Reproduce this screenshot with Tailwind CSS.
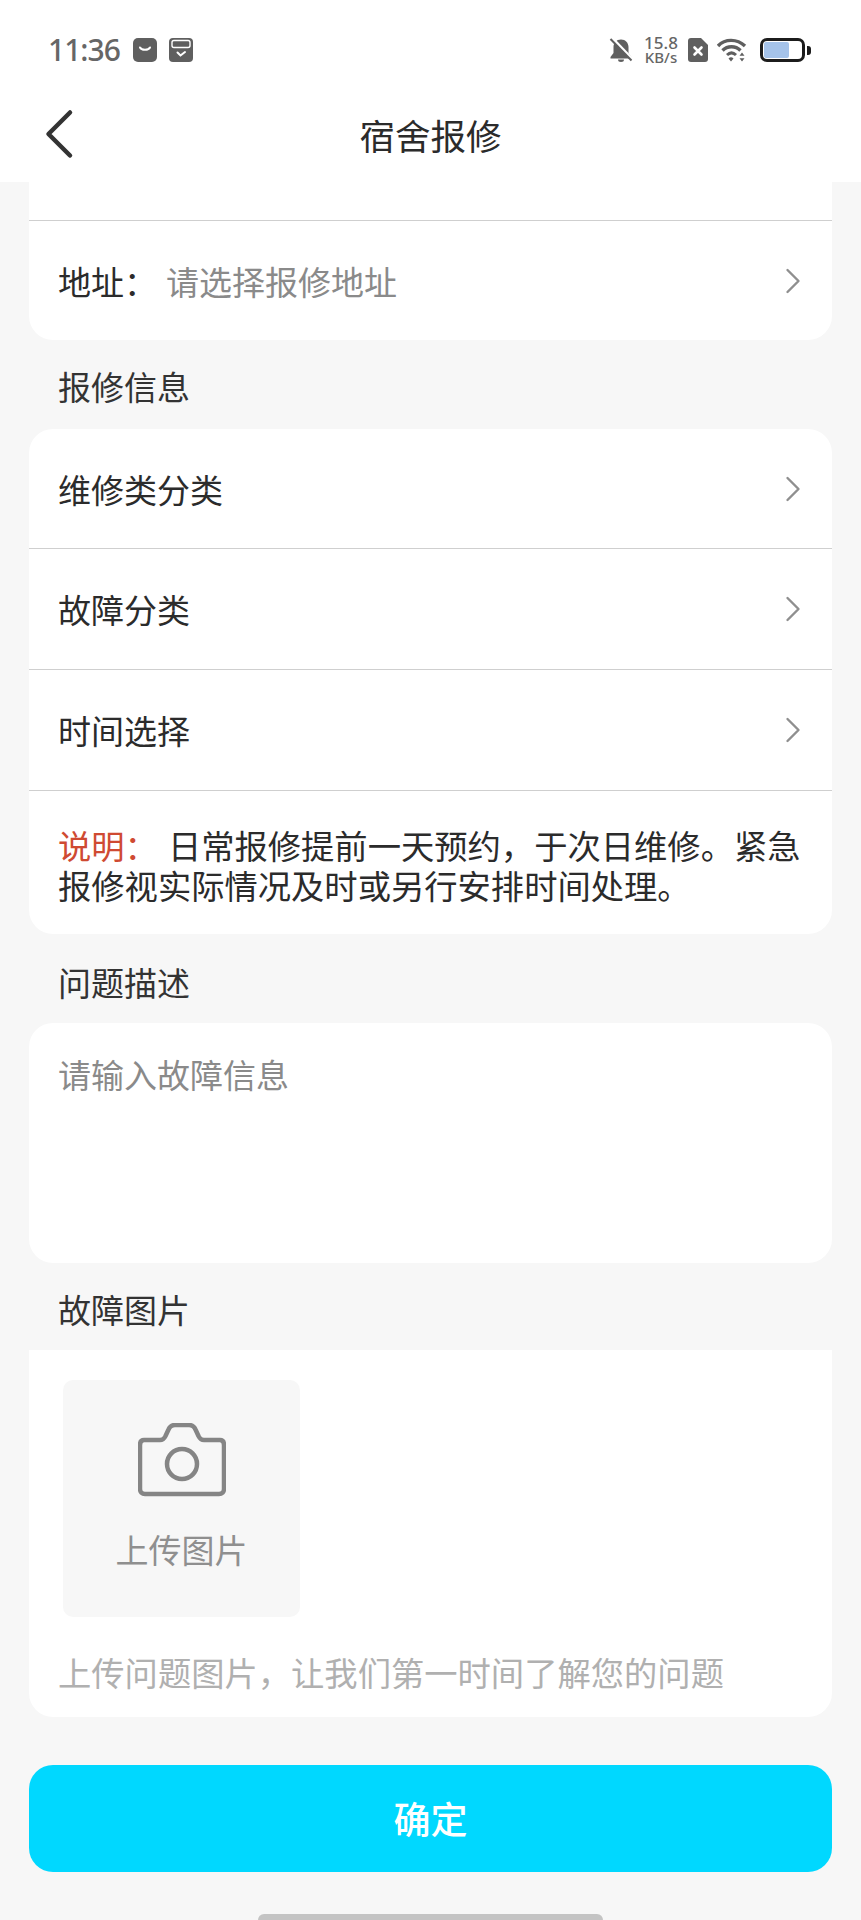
<!DOCTYPE html>
<html lang="zh-CN">
<head>
  <meta charset="UTF-8">
  <meta name="viewport" content="width=device-width, initial-scale=1.0">
  <title>宿舍报修</title>
  <script src="https://cdn.jsdelivr.net/npm/@tailwindcss/browser@4"></script>
</head>
<body class="bg-[#f7f7f7] text-[#2b2b2b] font-['Noto_Sans_CJK_SC','Noto_Sans',sans-serif]">
  <div class="w-[861px] h-[1920px] overflow-hidden flex flex-col relative">

    <!-- status bar + nav -->
    <header class="bg-white h-[182px] shrink-0">
      <div class="h-[76px] pt-[27px] pl-[48px] pr-[50px] flex justify-between items-start">
        <div class="flex items-center h-[46px]">
          <span class="font-['Noto_Sans',sans-serif] font-medium text-[30px] tracking-[-1px] leading-[46px] text-[#666] w-[85px]">11:36</span>
          <svg width="24" height="24" viewBox="0 0 24 24"><rect width="24" height="24" rx="5" fill="#5f5f5f"/><path d="M7 9.500c1.500 3 8.500 3 10 0" fill="none" stroke="#fff" stroke-width="2" stroke-linecap="round"/></svg>
          <svg class="ml-[12px]" width="24" height="24" viewBox="0 0 24 24"><rect width="24" height="24" rx="4" fill="#5f5f5f"/><rect x="3" y="2.500" width="18" height="7" rx="2" fill="none" stroke="#fff" stroke-width="1.400"/><path d="M8.500 14.500l3 3 4.500-3.500" fill="none" stroke="#fff" stroke-width="2" stroke-linecap="round"/></svg>
        </div>
        <div class="flex items-center h-[46px]">
          <svg width="24" height="24" viewBox="0 0 24 24"><path d="M12 1.500c-4.500 0-7.500 3.500-7.500 7.500v6l-3 4v1.500h21v-1.500l-3-4v-6c0-4-3-7.500-7.500-7.500z" fill="#5f5f5f"/><path d="M9 21.500a3 2.500 0 0 0 6 0z" fill="#5f5f5f"/><path d="M3 0l21 22" stroke="#fff" stroke-width="3"/><path d="M1.500 1l21 21.500" stroke="#5f5f5f" stroke-width="2"/></svg>
          <div class="ml-[9px] w-[38px] text-[#666] font-['Noto_Sans',sans-serif] font-medium text-center">
            <div class="text-[17px] leading-[14px]">15.8</div>
            <div class="text-[15px] leading-[14px]">KB/s</div>
          </div>
          <svg class="ml-[8px]" width="20" height="24" viewBox="0 0 20 24"><path d="M3 0h10l7 7v14a3 3 0 0 1-3 3H3a3 3 0 0 1-3-3V3a3 3 0 0 1 3-3z" fill="#5f5f5f"/><path d="M6.500 9.500l7 7m0-7l-7 7" stroke="#fff" stroke-width="2.600" stroke-linecap="round"/></svg>
          <svg class="ml-[9px]" width="30" height="24" viewBox="0 0 30 24"><path d="M1 8c7-7.500 19-7.500 27 0" fill="none" stroke="#5f5f5f" stroke-width="3.400"/><path d="M5.500 12.500c5-5 13-5 18 0" fill="none" stroke="#5f5f5f" stroke-width="3.400"/><path d="M10 17c3-2.800 6-2.800 9 0" fill="none" stroke="#5f5f5f" stroke-width="3"/><path d="M11.500 20.500a3.500 3.500 0 0 1 5 0l-2.500 3z" fill="#5f5f5f"/><path d="M25 14.500l2.500 3.200h-5zM25 23.500l2.500-3.200h-5z" fill="#5f5f5f"/></svg>
          <div class="ml-[13px] w-[45px] h-[24px] border-[3px] border-[#1c1c1c] rounded-[7px] p-[1px] flex">
            <div class="w-[25px] bg-[#a5c3ea] rounded-[2px]"></div>
          </div>
          <div class="ml-[2px] w-[4px] h-[9px] bg-[#1c1c1c] rounded-r-[3px]"></div>
        </div>
      </div>
      <nav class="relative h-[106px] flex items-center justify-center">
        <svg class="absolute left-[44px] top-[33px]" width="30" height="50" viewBox="0 0 30 50"><path d="M26 3.500L4.500 25 26 46.500" fill="none" stroke="#333" stroke-width="4.500" stroke-linecap="round" stroke-linejoin="round"/></svg>
        <h1 class="text-[35.500px] leading-[50px] font-normal mt-[12px] text-[#2b2b2b]">宿舍报修</h1>
      </nav>
    </header>

    <main class="flex-1 px-[29px]">
      <!-- address card, its upper rows are scrolled away under the header -->
      <section class="bg-white rounded-b-[24px] h-[158px] pt-[38px]">
        <div class="h-[120px] border-t border-[#cfcfcf] pl-[29px] pr-[31px] flex items-center justify-between">
          <div class="flex items-center text-[33px] leading-[46px]">
            <span class="w-[108px]">地址：</span>
            <span class="text-[#8a8a8a]">请选择报修地址</span>
          </div>
          <svg width="16" height="26" viewBox="0 0 16 26"><path d="M2.500 2l11 11-11 11" fill="none" stroke="#8f8f8f" stroke-width="2.400" stroke-linecap="round" stroke-linejoin="round"/></svg>
        </div>
      </section>

      <h2 class="h-[89px] pl-[29px] pt-[23px] text-[33px] leading-[46px] font-normal text-[#333]">报修信息</h2>

      <section class="bg-white rounded-[24px]">
        <div class="h-[120px] border-b border-[#cfcfcf] pl-[29px] pr-[31px] flex items-center justify-between">
          <span class="text-[33px] leading-[46px]">维修类分类</span>
          <svg width="16" height="26" viewBox="0 0 16 26"><path d="M2.500 2l11 11-11 11" fill="none" stroke="#8f8f8f" stroke-width="2.400" stroke-linecap="round" stroke-linejoin="round"/></svg>
        </div>
        <div class="h-[121px] border-b border-[#cfcfcf] pl-[29px] pr-[31px] flex items-center justify-between">
          <span class="text-[33px] leading-[46px]">故障分类</span>
          <svg width="16" height="26" viewBox="0 0 16 26"><path d="M2.500 2l11 11-11 11" fill="none" stroke="#8f8f8f" stroke-width="2.400" stroke-linecap="round" stroke-linejoin="round"/></svg>
        </div>
        <div class="h-[121px] border-b border-[#cfcfcf] pl-[29px] pr-[31px] flex items-center justify-between">
          <span class="text-[33px] leading-[46px]">时间选择</span>
          <svg width="16" height="26" viewBox="0 0 16 26"><path d="M2.500 2l11 11-11 11" fill="none" stroke="#8f8f8f" stroke-width="2.400" stroke-linecap="round" stroke-linejoin="round"/></svg>
        </div>
        <p class="h-[143px] pt-[34px] pl-[29px] pr-[24px] text-[33.300px] leading-[40px]">
          <span class="text-[#cf4a32]">说明：</span><span class="ml-[10px]">日常报修提前一天预约，于次日维修。紧急报修视实际情况及时或另行安排时间处理。</span>
        </p>
      </section>

      <h2 class="h-[89px] pl-[29px] pt-[25px] text-[33px] leading-[46px] font-normal text-[#333]">问题描述</h2>

      <section class="bg-white rounded-[24px] h-[240px] pl-[29px] pt-[28px]">
        <p class="text-[33px] leading-[46px] text-[#8a8a8a]">请输入故障信息</p>
      </section>

      <h2 class="h-[87px] pl-[29px] pt-[23px] text-[33px] leading-[46px] font-normal text-[#333]">故障图片</h2>

      <section class="bg-white rounded-b-[24px] h-[367px] pt-[30px] pl-[29px]">
        <div class="w-[237px] h-[237px] ml-[5px] bg-[#f7f7f7] rounded-[10px] flex flex-col items-center pt-[43px]">
          <svg width="88" height="74" viewBox="0 0 88 74"><path d="M6 17h16c3 0 4-1 5.500-4l3-6.500C32 3 34 2 37 2h14c3 0 5 1 6.500 4.500l3 6.500c1.500 3 2.500 4 5.500 4h16c3 0 4 2 4 5v44c0 3-2 5-5 5H7c-3 0-5-2-5-5V22c0-3 1-5 4-5z" fill="none" stroke="#858585" stroke-width="4.500"/><circle cx="44" cy="41" r="15" fill="none" stroke="#858585" stroke-width="4.500"/></svg>
          <span class="mt-[29px] text-[33px] leading-[46px] text-[#8f8f8f]">上传图片</span>
        </div>
        <p class="mt-[32px] text-[33.300px] leading-[46px] whitespace-nowrap text-[#b0b0b0]">上传问题图片，让我们第一时间了解您的问题</p>
      </section>

      <button class="mt-[48px] w-full h-[107px] rounded-[24px] bg-[#00d8ff] text-white text-[37px] font-medium">确定</button>
    </main>

    <div class="absolute bottom-0 left-[258px] w-[345px] h-[6px] bg-[#c4c4c4] rounded-t-full"></div>
  </div>
</body>
</html>
